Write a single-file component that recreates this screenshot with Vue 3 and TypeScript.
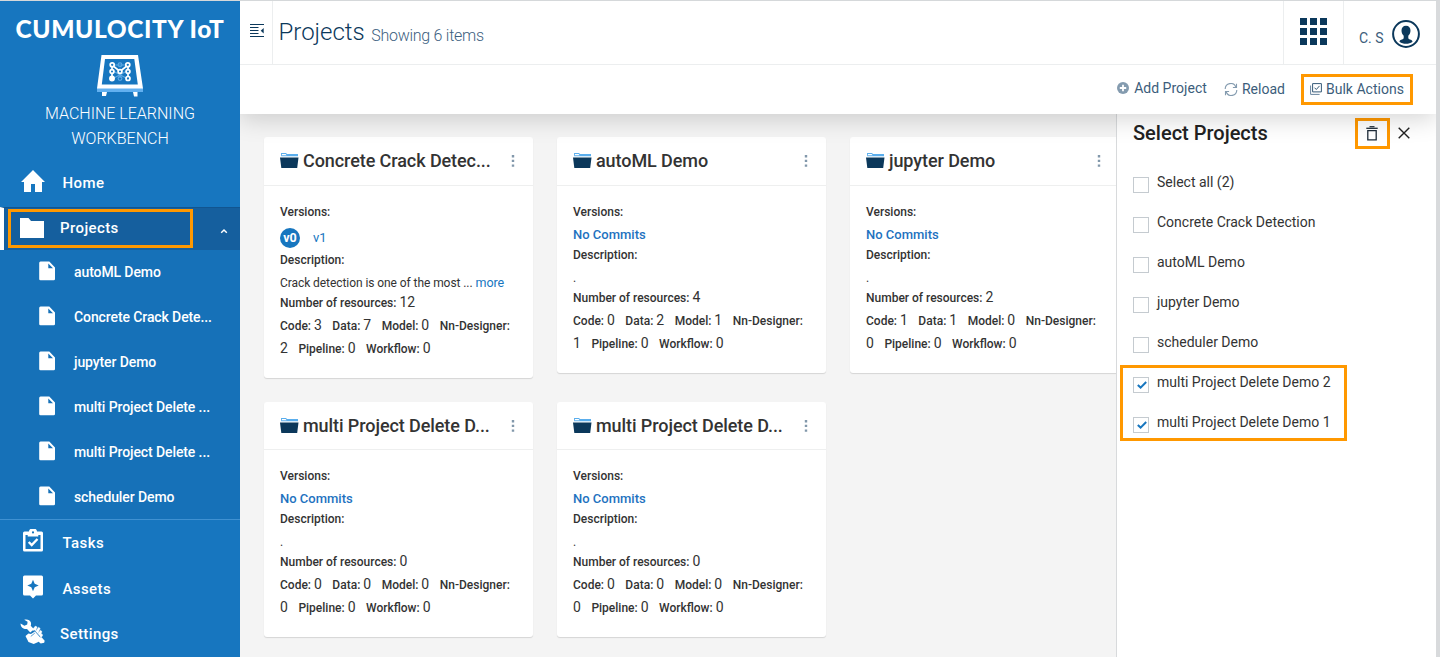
<script setup lang="ts">
interface Project {
  name: string
  versions: string[]
  description: string
  more: boolean
  total: number
  code: number
  data: number
  model: number
  designer: number
}

interface Choice {
  label: string
  checked: boolean
}

const subItems: string[] = [
  'autoML Demo',
  'Concrete Crack Dete...',
  'jupyter Demo',
  'multi Project Delete ...',
  'multi Project Delete ...',
  'scheduler Demo',
]

const projects: Project[] = [
  { name: 'Concrete Crack Detec...', versions: ['v0', 'v1'], description: 'Crack detection is one of the most ...', more: true, total: 12, code: 3, data: 7, model: 0, designer: 2 },
  { name: 'autoML Demo', versions: [], description: '.', more: false, total: 4, code: 0, data: 2, model: 1, designer: 1 },
  { name: 'jupyter Demo', versions: [], description: '.', more: false, total: 2, code: 1, data: 1, model: 0, designer: 0 },
  { name: 'multi Project Delete D...', versions: [], description: '.', more: false, total: 0, code: 0, data: 0, model: 0, designer: 0 },
  { name: 'multi Project Delete D...', versions: [], description: '.', more: false, total: 0, code: 0, data: 0, model: 0, designer: 0 },
]

const choices: Choice[] = [
  { label: 'Select all (2)', checked: false },
  { label: 'Concrete Crack Detection', checked: false },
  { label: 'autoML Demo', checked: false },
  { label: 'jupyter Demo', checked: false },
  { label: 'scheduler Demo', checked: false },
]

const marked: Choice[] = [
  { label: 'multi Project Delete Demo 2', checked: true },
  { label: 'multi Project Delete Demo 1', checked: true },
]
</script>

<template>
  <div class="app">
    <nav class="sidebar">
      <div class="brand">CUMULOCITY IoT</div>
      <svg class="brand-logo" width="48" height="43" viewBox="0 0 48 43">
        <path d="M1 33h46v4H1z" fill="#62b0f0" />
        <path fill-rule="evenodd" d="M5.500 0h36.500L47 33.500H1zM9 4L5.800 29.500h36L38.300 4z" fill="#fff" />
        <path d="M6 37h5l-1 4H6zM37 37h4.500v4.500H38z" fill="#fff" />
        <g fill="none" stroke="#5fa9e4" stroke-width="1.100">
          <path d="M17 10h14M17 16l14 7.500M31 16l-14 7.500M24 17v6" />
          <circle cx="24" cy="9.800" r="1.900" /><circle cx="24" cy="23.500" r="1.900" />
        </g>
        <g fill="#1776bf" stroke="#fff" stroke-width="1.700">
          <path d="M16 23.500V10l8 6.500L32 10v13.500" fill="none" />
          <circle cx="16.200" cy="9.800" r="2" /><circle cx="31.800" cy="9.800" r="2" />
          <circle cx="16" cy="16.500" r="1.900" /><circle cx="24" cy="16.500" r="1.900" /><circle cx="32" cy="16.500" r="1.900" />
          <circle cx="16" cy="23.500" r="2.100" fill="#fff" /><circle cx="32" cy="23.500" r="2" />
        </g>
      </svg>
      <div class="product">MACHINE LEARNING<br />WORKBENCH</div>

      <a class="item home">
        <svg width="26" height="24" viewBox="0 0 26 24"><path d="M13 1L1 13h3v10h7v-8h4v8h7V13h3z" fill="#fff" /></svg>
        <span>Home</span>
      </a>
      <a class="item active">
        <svg width="26" height="22" viewBox="0 0 26 22"><path d="M1 1h8.500l2.500 3h13v17H1z" fill="#fff" /></svg>
        <span>Projects</span>
        <svg class="chevron" width="8" height="6" viewBox="0 0 8 6"><path d="M1.200 4.700L4 2l2.800 2.700" fill="none" stroke="#fff" stroke-width="1.500" /></svg>
        <i class="mark mark-nav"></i>
      </a>
      <div class="sub">
        <a v-for="(name, i) in subItems" :key="i" class="sub-item">
          <svg width="16" height="20" viewBox="0 0 16 20"><path fill-rule="evenodd" d="M1.500 0.500h8.800L16 6.500V18a1.300 1.300 0 0 1-1.300 1.300H1.500A1.300 1.300 0 0 1 .2 18V2A1.500 1.500 0 0 1 1.500.5zM9.300 2.500v4.700H14z" fill="#fff" /></svg>
          <span>{{ name }}</span>
        </a>
      </div>
      <a class="item tasks">
        <svg width="22" height="24" viewBox="0 0 22 24">
          <path fill-rule="evenodd" d="M2.500 2.500H7A4 3 0 0 1 15 2.500h4.500A1.500 1.500 0 0 1 21 4v17a1.500 1.500 0 0 1-1.500 1.500h-17A1.500 1.500 0 0 1 1 21V4a1.500 1.500 0 0 1 1.500-1.500zM3.500 6v14h15V6h-2.200v1.500H5.700V6zM11 2.300a1.100 1.100 0 1 0 0 2.200 1.100 1.100 0 0 0 0-2.200z" fill="#fff" />
          <path d="M6.700 13l3 3 5.800-6" fill="none" stroke="#fff" stroke-width="2.400" />
        </svg>
        <span>Tasks</span>
      </a>
      <a class="item assets">
        <svg width="22" height="24" viewBox="0 0 22 24"><path fill-rule="evenodd" d="M2.500.5h17A1.500 1.500 0 0 1 21 2v17a1.500 1.500 0 0 1-1.500 1.500H14l-3 3-3-3H2.500A1.500 1.500 0 0 1 1 19V2A1.500 1.500 0 0 1 2.500.5zM11 4.800l-1.700 4L5.300 10.500l4 1.700 1.700 4 1.700-4 4-1.700-4-1.700z" fill="#fff" /></svg>
        <span>Assets</span>
      </a>
      <a class="item settings">
        <svg width="26" height="25" viewBox="0 0 26 25" fill="#fff">
          <path d="M.6 4.600l3.800 2.200 2.800-1.200L7.600 2.800 4.200.8c3-.9 5.900.3 6.700 2.700.3 1.300.2 2.300-.2 3.200l3.300 3.600-3.700 3.100-3.300-3.400C3.900 10.600.3 8.300.6 4.600z" />
          <path d="M5.500 17l3-2.600 2.500.5 4.300-2.700 5.200 5.500.5 3-3.300 2.600-4 1.600-5.200-2z" />
          <path d="M20 18.200l1.800.2 2.900 3.400-.5 2-3.500.6-3.500-3z" />
          <path d="M12.300 10.800l3-3.700 1.900.9-1.800 4.200zM15.300 12.700l3.300-4.500 1.600 1.200-2.300 5.200zM17.600 15l2.900-3.700 1.500 1.300-1.700 4.200zM19.500 17.200l2-2.500 1.300 1.300-1.500 2.500z" stroke="#fff" stroke-width=".4" />
          <path d="M10.800 17.400l4-3.300M14.200 11.100l6 7.100" fill="none" stroke="#1776bf" stroke-width=".7" />
        </svg>
        <span>Settings</span>
      </a>
    </nav>

    <div class="main">
      <header class="header">
        <div class="toggle">
          <svg width="14" height="14" viewBox="0 0 14 14"><path d="M0 .5h14M0 3.500h8.500M0 6.500h8.500M0 9.500h8.500M0 12.500h14" stroke="#0b385b" stroke-width="1" /><path d="M13.700 4v5.500l-3-2.700z" fill="#0b385b" /></svg>
        </div>
        <h1>Projects</h1>
        <span class="count">Showing 6 items</span>
        <div class="apps">
          <svg width="27" height="27" viewBox="0 0 27 27" fill="#0b385b"><path d="M0 0h7v7H0zM10 0h7v7h-7zM20 0h7v7h-7zM0 10h7v7H0zM10 10h7v7h-7zM20 10h7v7h-7zM0 20h7v7H0zM10 20h7v7h-7zM20 20h7v7h-7z" /></svg>
        </div>
        <div class="user">
          <span>C. S</span>
          <svg width="28" height="28" viewBox="0 0 28 28"><circle cx="14" cy="14" r="12.900" fill="none" stroke="#0b385b" stroke-width="2" /><path d="M14 5.700c3 0 4.600 2 4.500 5-.1 2.300-1 3.900-2.200 5.100v2.400c.8 1.600 4.200 1.300 4.200 3.500-1.900 1.400-4 2-6.500 2s-4.600-.6-6.500-2c0-2.200 3.400-1.900 4.200-3.500v-2.400c-1.200-1.200-2.100-2.800-2.200-5.100-.1-3 1.500-5 4.500-5z" fill="#0b385b" /></svg>
        </div>
      </header>

      <div class="toolbar">
        <a class="add">
          <svg width="12" height="12" viewBox="0 0 12 12"><circle cx="6" cy="6" r="6" fill="#849baf" /><path d="M6 2.800v6.400M2.800 6h6.400" stroke="#fff" stroke-width="1.800" /></svg>
          <span>Add Project</span>
        </a>
        <a class="reload">
          <svg width="14" height="13" viewBox="0 0 14 13" fill="none" stroke="#849baf" stroke-width="1.100"><path d="M1.200 6A5.500 5.500 0 0 1 11.800 4M12.800 7A5.500 5.500 0 0 1 2.200 9M12.500.8v3.700H8.900M1.500 12.200V8.500h3.600" /></svg>
          <span>Reload</span>
        </a>
        <a class="bulk">
          <svg width="12" height="12" viewBox="0 0 12 12" fill="none"><path d="M.6 2.500v8.900h9" stroke="#6a869f" /><path d="M2.600.6h8.800v8.300H2.600z" stroke="#365a78" /><path d="M4.500 4.700l1.800 1.800 3.200-3.600" stroke="#365a78" /></svg>
          <span>Bulk Actions</span>
          <i class="mark mark-bulk"></i>
        </a>
      </div>

      <div class="content">
        <div class="grid">
          <article v-for="(p, i) in projects" :key="i" class="card">
            <div class="card-head">
              <svg width="19" height="15" viewBox="0 0 19 15"><path d="M1 0h5l1 1h11v2.300H1.200z" fill="#5aaeed" /><path d="M2 1.100h3.600l1 1.200H2z" fill="#fff" /><path d="M0 4.500h18.500L17.200 15H1.300z" fill="#0b385b" /></svg>
              <h2>{{ p.name }}</h2>
              <svg class="dots" width="4" height="12" viewBox="0 0 4 12" fill="#8298ab"><path d="M.8 0h2.400v2.400H.8zM.8 4.700h2.400v2.400H.8zM.8 9.400h2.400v2.400H.8z" /></svg>
            </div>
            <div class="card-body">
              <div class="label versions-label">Versions:</div>
              <div v-if="p.versions.length" class="versions">
                <b>{{ p.versions[0] }}</b><a>{{ p.versions[1] }}</a>
              </div>
              <div v-else class="no-commits">No Commits</div>
              <div class="label desc-label">Description:</div>
              <div class="desc">{{ p.description }} <a v-if="p.more">more</a></div>
              <div class="label total">Number of resources: <em>{{ p.total }}</em></div>
              <div class="label counts">
                <span>Code: <em>{{ p.code }}</em></span>
                <span>Data: <em>{{ p.data }}</em></span>
                <span>Model: <em>{{ p.model }}</em></span>
                <span>Nn-Designer:<br /><em>{{ p.designer }}</em></span>
                <span>Pipeline: <em>0</em></span>
                <span>Workflow: <em>0</em></span>
              </div>
            </div>
          </article>
        </div>

        <aside class="panel">
          <div class="panel-head">
            <h3>Select Projects</h3>
            <div class="trash">
              <svg width="12" height="15" viewBox="0 0 12 15" fill="none" stroke="#1d2b38"><path d="M3.500.7h5" stroke-width="1.200" /><path d="M.3 2.300h11.400" stroke-width="1.300" /><path d="M1.800 4.600h8.400v9.300H1.800z" stroke-width="1.300" /></svg>
              <i class="mark mark-trash"></i>
            </div>
            <svg class="close" width="12" height="12" viewBox="0 0 12 12"><path d="M.7.700l10.600 10.600M11.300.7L.7 11.300" stroke="#222" stroke-width="1.400" /></svg>
          </div>
          <label v-for="c in choices" :key="c.label" class="choice"><span class="box"></span>{{ c.label }}</label>
          <div class="marked">
            <label v-for="c in marked" :key="c.label" class="choice">
              <span class="box"><svg width="10" height="8" viewBox="0 0 10 8"><path d="M.8 4l2.800 2.600L9.200 1" fill="none" stroke="#1776bf" stroke-width="2" /></svg></span>{{ c.label }}
            </label>
            <i class="mark mark-choices"></i>
          </div>
        </aside>
      </div>
    </div>
  </div>
</template>

<style>
body { margin: 0; overflow: hidden; }
</style>

<style scoped>
* { box-sizing: border-box; }
.app {
  display: flex;
  width: 1440px;
  height: 657px;
  overflow: hidden;
  border-top: 1px solid #d5d8da;
  border-right: 4px solid #d8dadc;
  background: #f4f4f4;
  color: #333;
  font-family: Roboto, "Liberation Sans", sans-serif;
  font-size: 14px;
}
svg { display: block; flex: none; }
h1, h2, h3 { margin: 0; font-weight: 400; white-space: nowrap; }
em { font-style: normal; }
.mark { position: absolute; border: 3px solid #ff9800; pointer-events: none; }

.sidebar { position: relative; z-index: 3; width: 240px; flex: none; background: #1776bf; color: #fff; display: flex; flex-direction: column; }
.brand { height: 54px; padding-top: 13px; text-align: center; white-space: nowrap; font: 900 24.500px/30px Lato, sans-serif; letter-spacing: 0.600px; }
.brand-logo { align-self: center; }
.product { margin-top: 3px; height: 58px; text-align: center; font-size: 16px; line-height: 25px; font-weight: 300; }
.item { display: flex; align-items: center; flex: none; font-size: 15px; font-weight: 500; letter-spacing: 0.400px; position: relative; }
.home { height: 48px; padding-left: 20px; gap: 16.500px; }
.home svg { margin-top: -5px; }
.active { height: 43px; padding-left: 15px; border-left: 4px solid #fff; border-top: 1px solid #115590; background: #155f9e; gap: 15px; }
.active svg { margin-top: -3px; }
.active span { margin-top: -2px; }
.active .chevron { margin: 3px 12px 0 auto; }
.mark-nav { left: 4px; top: 1px; width: 185px; height: 39px; }
.sub { background: #1671b8; border-bottom: 1px solid #3f91d2; height: 270px; flex: none; }
.sub-item { display: flex; align-items: center; gap: 19px; height: 45px; padding-left: 39px; font-size: 14px; font-weight: 500; letter-spacing: -0.100px; }
.sub-item svg { margin-top: -4px; }
.sub-item span { margin-top: -1px; }
.tasks, .assets { height: 46px; padding-left: 22px; gap: 18.500px; }
.tasks svg { margin-top: -5px; }
.assets svg { margin-top: -4px; }
.settings { height: 44px; padding-left: 20px; gap: 14px; }
.settings svg { margin-top: -5px; }
.tasks span, .assets span, .settings span { margin-top: -1px; }

.main { flex: 1; min-width: 0; display: flex; flex-direction: column; }
.header { position: relative; z-index: 3; height: 64px; flex: none; display: flex; align-items: center; background: #fff; border-bottom: 1px solid #eceeef; color: #0b385b; }
.toggle { width: 33px; height: 63px; border-right: 1px solid #eceeef; padding: 23px 0 0 10px; }
h1 { margin: -1px 0 0 5.500px; font-size: 24px; line-height: 30px; font-weight: 300; }
.count { margin: 6px 0 0 6.500px; font-size: 16px; font-weight: 300; color: #3c6080; white-space: nowrap; letter-spacing: -0.270px; }
.apps { margin-left: auto; width: 61px; height: 63px; border: 1px solid #eceeef; border-width: 0 1px; padding: 17px 0 0 16px; }
.user { width: 92px; height: 63px; display: flex; gap: 8px; padding: 19px 0 0 15px; font-size: 14px; color: #3c5d7b; }
.user span { line-height: 36px; width: 25px; white-space: nowrap; }

.toolbar { position: relative; z-index: 2; height: 49px; flex: none; display: flex; justify-content: flex-end; background: #fff; padding-right: 32px; color: #3c5d7b; font-size: 14px; letter-spacing: 0.020px; box-shadow: 0 5px 24px rgba(0, 0, 0, 0.17); }
.toolbar a { display: flex; align-items: center; white-space: nowrap; position: relative; }
.add { gap: 5px; margin-right: 17px; height: 46px; }
.reload, .bulk { height: 48px; }
.reload { gap: 4px; margin-right: 25px; }
.bulk { gap: 4px; }
.mark-bulk { left: -9px; top: 9px; width: 112px; height: 31px; }

.content { flex: 1; display: flex; min-height: 0; }
.grid { width: 876px; flex: none; overflow: hidden; display: grid; grid-template-columns: repeat(3, 269px); gap: 24px; align-content: start; align-items: start; padding: 23px 0 0 24px; }
.card { background: #fff; border-radius: 3px; box-shadow: 0 1px 1px rgba(0, 0, 0, 0.13); }
.card-head { height: 49px; display: flex; align-items: center; border-bottom: 1px solid #eeefef; padding: 0 18px 0 16px; gap: 4px; }
.card-head svg:first-child { margin-top: -1px; }
.card:nth-child(n + 4) .card-head { height: 48px; }
h2 { font-size: 18px; font-weight: 500; line-height: 24px; letter-spacing: -0.080px; }
.dots { margin-left: auto; }
.card-body { padding: 16px 16px 17px; }
.label { font-size: 12px; font-weight: 500; white-space: nowrap; }
.versions-label { line-height: 20px; }
.versions { display: flex; align-items: center; height: 29px; padding-top: 2px; gap: 13px; font-size: 13px; color: #1776bf; }
.versions b { width: 20px; height: 20px; border-radius: 50%; background: #1776bf; color: #fff; font-size: 12.500px; line-height: 20px; text-align: center; }
.no-commits { height: 24px; line-height: 26px; font-size: 13px; font-weight: 500; color: #1e72c0; }
.desc-label { line-height: 18px; margin-bottom: 4px; }
.desc { height: 20px; line-height: 20px; font-size: 12px; white-space: nowrap; letter-spacing: -0.070px; }
.desc a { color: #1776bf; font-size: 12.500px; }
.total { height: 20px; line-height: 20px; margin-bottom: 2px; }
.label em { font-size: 14px; font-weight: 400; line-height: 1; }
.counts { line-height: 23px; height: 46px; }
.counts span { margin-right: 10.500px; }

.panel { flex: 1; background: #fff; border-left: 1px solid #d8dadc; padding: 0 0 0 16px; }
.panel-head { display: flex; align-items: center; height: 38px; }
h3 { font-size: 20px; font-weight: 500; color: #222; width: 233px; }
.trash { position: relative; width: 12px; }
.mark-trash { left: -11px; top: -8px; width: 35px; height: 31px; }
.close { margin-left: 20px; }
.panel-head + .choice { margin-top: 10px; }
.choice { display: flex; height: 40px; line-height: 40px; font-size: 14px; gap: 8px; white-space: nowrap; }
.box { width: 16px; height: 16px; border: 1px solid #c5cbd0; margin-top: 15px; padding: 3px 0 0 3px; flex: none; }
.marked { position: relative; }
.mark-choices { left: -13px; top: 3px; width: 227px; height: 76px; }
</style>
